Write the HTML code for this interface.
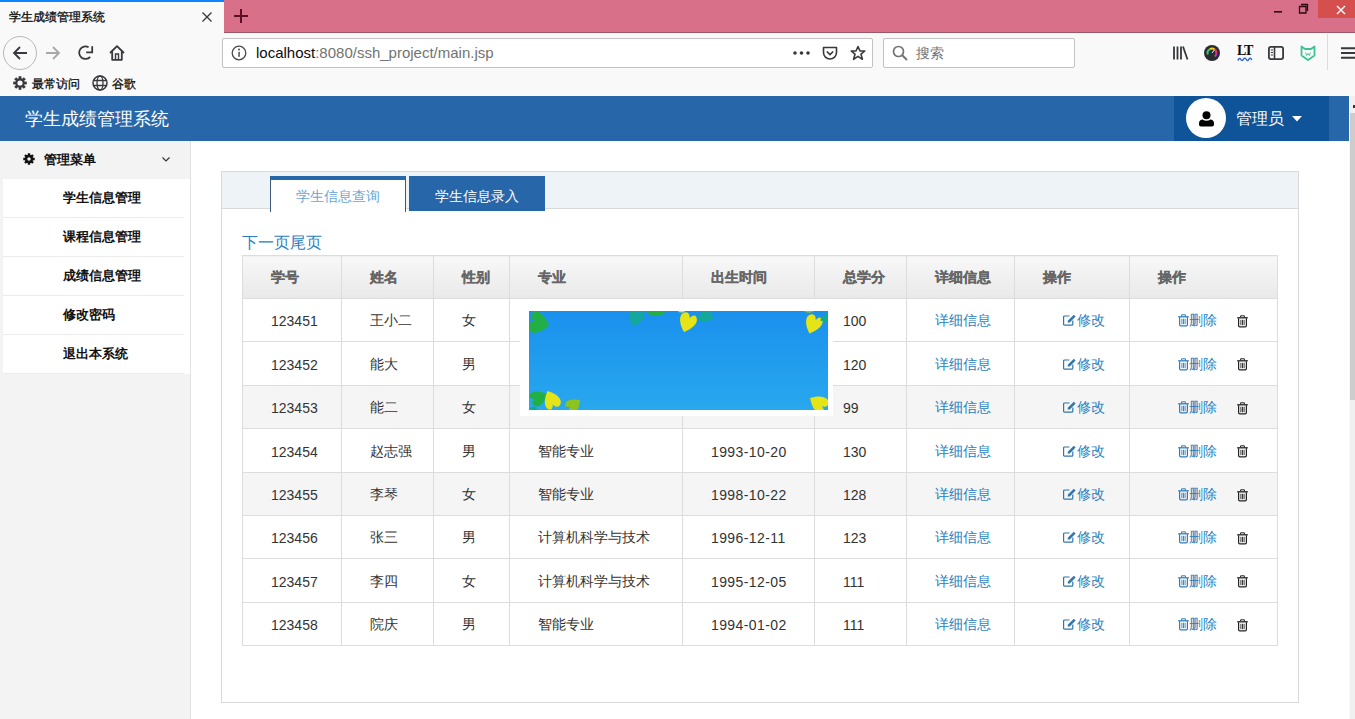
<!DOCTYPE html>
<html><head><meta charset="utf-8">
<style>
*{box-sizing:border-box;margin:0;padding:0}
html,body{width:1355px;height:719px;overflow:hidden;background:#fff;font-family:"Liberation Sans",sans-serif;position:relative}
.a{position:absolute}
svg{position:absolute;overflow:visible}
/* browser chrome */
#tabbar{left:0;top:0;width:1355px;height:33px;background:#d9708a;border-bottom:1px solid #9a5868}
#tab{left:0;top:0;width:224px;height:33px;background:#f9f9fa;border-top:2px solid #0a84ff}
#tab .t{left:9px;top:7px;font-size:12px;color:#0c0c0d;white-space:nowrap;-webkit-text-stroke:0.3px #0c0c0d}
#nav{left:0;top:33px;width:1355px;height:63px;background:#f9f9fa}
.url{border:1px solid #c2c2c4;background:#fff;border-radius:2px}
#page{left:0;top:96px;width:1349px;height:623px;background:#fff;overflow:hidden}
#hdr{left:0;top:0;width:1349px;height:45px;background:#2767a9}
#hdr .title{left:25px;top:11px;font-size:18px;color:#fff;white-space:nowrap}
#user{left:1174px;top:0;width:155px;height:45px;background:#0f5499}
#side{left:0;top:45px;width:191px;height:600px;background:#f3f3f3;border-right:1px solid #e2e2e2}
.mi{left:3px;width:187px;height:39px;background:#fff;box-shadow:inset 0 -1px 0 #fff;font-size:13px;font-weight:bold;color:#111}
.mi span{position:absolute;left:60px;top:10px;white-space:nowrap}
.mi:after{content:"";position:absolute;left:0;bottom:0;width:181px;height:1px;background:#ececec}
#panel{left:221px;top:75px;width:1078px;height:532px;border:1px solid #d9d9d9;background:#fff}
#panelhead{left:0;top:0;width:1076px;height:37px;background:#eef3f8;border-bottom:1px solid #d9d9d9}
table{border-collapse:collapse;position:absolute;left:242px;top:159px;width:1035px;table-layout:fixed}
td,th{border:1px solid #ddd;font-size:14px;padding:2px 0 0 28px;text-align:left;white-space:nowrap;color:#333;font-weight:normal;position:relative}
th{height:43px;color:#666;font-weight:bold;-webkit-text-stroke:0.25px #666;background:linear-gradient(#f8f8f8,#e9e9e9);padding-top:1px}
tr.g td{background:#f5f5f5}
a{color:#2a7fc0;text-decoration:none}
td.e{padding-left:48px}
td.d{padding-left:48px}
.ic{display:inline-block;vertical-align:-1px}
</style></head><body>
<!-- ============ BROWSER CHROME ============ -->
<div id="tabbar" class="a"></div>
<div id="tab" class="a"><div class="t a">学生成绩管理系统</div></div>
<!-- tab close x -->
<svg style="left:201px;top:11px" width="12" height="12"><path d="M1.5 1.5L10.5 10.5M10.5 1.5L1.5 10.5" stroke="#38383d" stroke-width="1.3"/></svg>
<!-- new tab + -->
<svg style="left:233px;top:8px" width="16" height="16"><path d="M8 1V15M1 8H15" stroke="#5c0f25" stroke-width="2"/></svg>
<!-- window controls -->
<div class="a" style="left:1318px;top:0;width:37px;height:18px;background:#d54f4f"></div>
<svg style="left:1274px;top:11px" width="10" height="2"><rect x="0" y="0" width="8" height="1.6" fill="#2a0a12"/></svg>
<svg style="left:1298px;top:3px" width="12" height="12"><path d="M3 1.5H9.5V8M1.5 3.5H8V10H1.5Z" stroke="#2a0a12" stroke-width="1.3" fill="none"/></svg>
<svg style="left:1336px;top:5px" width="10" height="10"><path d="M1 1L9 9M9 1L1 9" stroke="#fff" stroke-width="1.4"/></svg>

<div id="nav" class="a"></div>
<!-- back button -->
<div class="a" style="left:3px;top:36px;width:34px;height:34px;border-radius:50%;border:1px solid #b8b8ba;background:#f9f9fa"></div>
<svg style="left:12px;top:45px" width="16" height="16"><path d="M15 8H2M8 2L2 8L8 14" stroke="#38383d" stroke-width="1.8" fill="none"/></svg>
<!-- forward -->
<svg style="left:45px;top:45px" width="16" height="16"><path d="M1 8H14M8 2L14 8L8 14" stroke="#a8a8ab" stroke-width="1.8" fill="none"/></svg>
<!-- reload -->
<svg style="left:78px;top:45px" width="16" height="16"><path d="M10.6 2.2A6.3 6.3 0 1 0 12.2 11.8" stroke="#38383d" stroke-width="1.8" fill="none"/><path d="M8.2 7.4H14.2V1.2" stroke="#38383d" stroke-width="1.8" fill="none"/></svg>
<!-- home -->
<svg style="left:109px;top:45px" width="17" height="16"><path d="M1 8L8 1.2L15 8M3.2 6.2V14.8H12.8V6.2" stroke="#38383d" stroke-width="1.8" fill="none" stroke-linejoin="round"/><path d="M6.5 14.5V9H9.5V14.5" stroke="#38383d" stroke-width="1.4" fill="none"/></svg>

<!-- url bar -->
<div class="a url" style="left:222px;top:38px;width:651px;height:30px"></div>
<svg style="left:231px;top:45px" width="16" height="16"><circle cx="8" cy="8" r="6.8" stroke="#4a4a4f" stroke-width="1.3" fill="none"/><rect x="7.3" y="6.8" width="1.5" height="5" fill="#4a4a4f"/><circle cx="8" cy="4.6" r="1" fill="#4a4a4f"/></svg>
<div class="a" style="left:256px;top:44px;font-size:15px;color:#0c0c0d;white-space:nowrap">localhost<span style="color:#737373">:8080/ssh_project/main.jsp</span></div>
<!-- dots -->
<svg style="left:793px;top:51px" width="18" height="4"><circle cx="2" cy="2" r="1.8" fill="#38383d"/><circle cx="8.5" cy="2" r="1.8" fill="#38383d"/><circle cx="15" cy="2" r="1.8" fill="#38383d"/></svg>
<!-- pocket -->
<svg style="left:822px;top:45px" width="16" height="16"><path d="M1.5 2.5H14.5V7.5A6.5 6.5 0 0 1 1.5 7.5Z" stroke="#38383d" stroke-width="1.6" fill="none" stroke-linejoin="round"/><path d="M4.8 6.5L8 9.5L11.2 6.5" stroke="#38383d" stroke-width="1.7" fill="none"/></svg>
<!-- star -->
<svg style="left:850px;top:45px" width="16" height="16"><path d="M8 1.5L10 6H14.8L11 9.2L12.4 14.3L8 11.4L3.6 14.3L5 9.2L1.2 6H6Z" stroke="#38383d" stroke-width="1.6" fill="none" stroke-linejoin="round"/></svg>

<!-- search box -->
<div class="a url" style="left:883px;top:38px;width:192px;height:30px"></div>
<svg style="left:892px;top:45px" width="16" height="16"><circle cx="6.5" cy="6.5" r="5" stroke="#737373" stroke-width="1.7" fill="none"/><path d="M10 10L15 15" stroke="#737373" stroke-width="2"/></svg>
<div class="a" style="left:916px;top:45px;font-size:14px;color:#737373">搜索</div>

<!-- right toolbar icons -->
<svg style="left:1173px;top:46px" width="16" height="14"><path d="M1 0.5V13.5M4.5 0.5V13.5M8 0.5V13.5M10 0.5L14.5 13.5" stroke="#38383d" stroke-width="1.8" fill="none"/></svg>
<svg style="left:1204px;top:45px" width="16" height="16"><circle cx="8" cy="8" r="8" fill="#2b2b30"/><path d="M3.8 9.5A4.4 4.4 0 0 1 6 4.2" stroke="#27d36b" stroke-width="2" fill="none"/><path d="M6 4.2A4.4 4.4 0 0 1 10.5 4.3" stroke="#f7d21c" stroke-width="2" fill="none"/><path d="M10.5 4.3A4.4 4.4 0 0 1 12.3 8.6" stroke="#f0336e" stroke-width="2" fill="none"/><path d="M12.3 8.6A4.4 4.4 0 0 1 10.8 11.5" stroke="#b03cd8" stroke-width="2" fill="none"/><path d="M8 8L10.5 4.8" stroke="#e9e9e9" stroke-width="1"/></svg>
<div class="a" style="left:1237px;top:43px;font-size:14px;font-weight:bold;color:#0c0c0d;letter-spacing:-1px;font-family:'Liberation Serif',serif">LT</div>
<svg style="left:1237px;top:57px" width="16" height="5"><path d="M0.8 3.5C1.8 1 3 1 3.8 2.5S5.5 4 6.5 2.2S8.5 1 9.3 2.5S11 4 12 2.2S14 1 14.8 3" stroke="#2a60d8" stroke-width="1.4" fill="none"/></svg>
<svg style="left:1268px;top:46px" width="16" height="14"><rect x="0.9" y="0.9" width="14.2" height="12.2" rx="2" stroke="#38383d" stroke-width="1.8" fill="none"/><path d="M6.5 1V13" stroke="#38383d" stroke-width="1.6"/><path d="M2.8 4H5M2.8 6.5H5M2.8 9H5" stroke="#38383d" stroke-width="1"/></svg>
<svg style="left:1300px;top:45px" width="16" height="16"><path d="M1.5 1.5L5 4H11L14.5 1.5V10.5L8 15L1.5 10.5Z" stroke="#3cc297" stroke-width="1.8" fill="none" stroke-linejoin="round"/><path d="M5.5 7.5L6.7 10.5L8 8.3L9.3 10.5L10.5 7.5" stroke="#3cc297" stroke-width="0.9" fill="none"/></svg>
<div class="a" style="left:1327px;top:34px;width:1px;height:36px;background:#dcdcde"></div>
<svg style="left:1341px;top:47px" width="16" height="12"><path d="M0 1.2H16M0 6H16M0 10.8H16" stroke="#38383d" stroke-width="1.9"/></svg>

<!-- bookmarks bar -->
<svg style="left:13px;top:76px" width="14" height="14"><g fill="#38383d"><rect x="5.6" y="0.2" width="2.8" height="3" transform="rotate(0 7 7)"/><rect x="5.6" y="0.2" width="2.8" height="3" transform="rotate(45 7 7)"/><rect x="5.6" y="0.2" width="2.8" height="3" transform="rotate(90 7 7)"/><rect x="5.6" y="0.2" width="2.8" height="3" transform="rotate(135 7 7)"/><rect x="5.6" y="0.2" width="2.8" height="3" transform="rotate(180 7 7)"/><rect x="5.6" y="0.2" width="2.8" height="3" transform="rotate(225 7 7)"/><rect x="5.6" y="0.2" width="2.8" height="3" transform="rotate(270 7 7)"/><rect x="5.6" y="0.2" width="2.8" height="3" transform="rotate(315 7 7)"/><circle cx="7" cy="7" r="4.7"/></g><circle cx="7" cy="7" r="2.6" fill="#f9f9fa"/></svg>
<div class="a" style="left:32px;top:76px;font-size:12px;color:#0c0c0d;-webkit-text-stroke:0.3px #0c0c0d">最常访问</div>
<svg style="left:92px;top:75px" width="16" height="16"><circle cx="8" cy="8" r="7" stroke="#38383d" stroke-width="1.5" fill="none"/><ellipse cx="8" cy="8" rx="3" ry="7" stroke="#38383d" stroke-width="1.3" fill="none"/><path d="M1.5 5.5H14.5M1.5 10.5H14.5" stroke="#38383d" stroke-width="1.3"/></svg>
<div class="a" style="left:112px;top:76px;font-size:12px;color:#0c0c0d;-webkit-text-stroke:0.3px #0c0c0d">谷歌</div>

<!-- ============ PAGE ============ -->
<div id="page" class="a">
  <div id="hdr" class="a"><div class="title a">学生成绩管理系统</div>
    <div id="user" class="a">
      <div class="a" style="left:12px;top:2px;width:40px;height:40px;border-radius:50%;background:#fff"></div>
      <svg style="left:25px;top:15px" width="15" height="16"><circle cx="7.5" cy="4.2" r="4" fill="#000"/><path d="M2 15.5C0.8 15.5 0 14.7 0 13.5V12.3C0 10 1.6 8.6 3.6 8.6C4.7 9.4 6 9.8 7.5 9.8S10.3 9.4 11.4 8.6C13.4 8.6 15 10 15 12.3V13.5C15 14.7 14.2 15.5 13 15.5Z" fill="#000"/></svg>
      <div class="a" style="left:62px;top:13px;font-size:16px;color:#fff">管理员</div>
      <svg style="left:118px;top:20px" width="10" height="6"><path d="M0 0H10L5 5.5Z" fill="#fff"/></svg>
    </div>
  </div>
  <div id="side" class="a">
    <svg style="left:23px;top:12px" width="12" height="12"><g fill="#111"><circle cx="6" cy="6" r="4.2"/><path d="M6 0.3V11.7M0.3 6H11.7M2 2L10 10M10 2L2 10" stroke="#111" stroke-width="2.4"/></g><circle cx="6" cy="6" r="1.7" fill="#f3f3f3"/></svg>
    <div class="a" style="left:44px;top:10px;font-size:13px;font-weight:bold;color:#111">管理菜单</div>
    <svg style="left:162px;top:16px" width="8" height="5"><path d="M0.5 0.5L4 4L7.5 0.5" stroke="#333" stroke-width="1.2" fill="none"/></svg>
  </div>
  <div class="mi a" style="top:83px"><span>学生信息管理</span></div>
  <div class="mi a" style="top:122px"><span>课程信息管理</span></div>
  <div class="mi a" style="top:161px"><span>成绩信息管理</span></div>
  <div class="mi a" style="top:200px"><span>修改密码</span></div>
  <div class="mi a" style="top:239px"><span>退出本系统</span></div>

  <div id="panel" class="a"><div id="panelhead" class="a"></div></div>
  <div class="a" style="left:270px;top:80px;width:136px;height:36px;background:#fff;border-top:4px solid #2767a9;border-left:1px solid #3a5a7c;border-right:1px solid #3a5a7c"></div>
  <div class="a" style="left:296px;top:92px;font-size:14px;color:#6aa6d2">学生信息查询</div>
  <div class="a" style="left:409px;top:80px;width:136px;height:35px;background:#2767a9"></div>
  <div class="a" style="left:435px;top:92px;font-size:14px;color:#fff">学生信息录入</div>
  <div class="a" style="left:242px;top:137px;font-size:16px;color:#2a7fc0">下一页尾页</div>

  <table>
    <colgroup><col style="width:99px"><col style="width:92px"><col style="width:76px"><col style="width:173px"><col style="width:132px"><col style="width:92px"><col style="width:108px"><col style="width:115px"><col style="width:148px"></colgroup>
    <tr><th>学号</th><th>姓名</th><th>性别</th><th>专业</th><th>出生时间</th><th>总学分</th><th>详细信息</th><th>操作</th><th>操作</th></tr>
    <tr style="height:43px"><td>123451</td><td>王小二</td><td>女</td><td></td><td></td><td>100</td><td><a>详细信息</a></td><td class="e"><a><svg class="ic" style="position:relative;vertical-align:-1px" width="14" height="12"><path d="M9.8 6.5V10.2C9.8 10.8 9.4 11.2 8.8 11.2H1.6C1 11.2 0.6 10.8 0.6 10.2V3C0.6 2.4 1 2 1.6 2H6.5" stroke="#2f77ad" stroke-width="1.2" fill="none"/><path d="M4.6 8.6L5 6.6L10.8 0.8L12.6 2.6L6.8 8.4Z" fill="#2f77ad"/></svg>修改</a></td><td class="d"><a><svg class="ic" style="position:relative;vertical-align:-2px" width="11" height="13"><path d="M3.6 2.3V0.8H7.4V2.3" stroke="#2f7db8" stroke-width="1" fill="none"/><path d="M0.2 2.8H10.8" stroke="#2f7db8" stroke-width="1.3"/><path d="M1.6 3.2V10.6Q1.6 11.9 2.8 11.9H8.2Q9.4 11.9 9.4 10.6V3.2" stroke="#2f7db8" stroke-width="1.2" fill="none"/><path d="M3.9 4.8V10.2M5.5 4.8V10.2M7.1 4.8V10.2" stroke="#2f7db8" stroke-width="0.9"/></svg>删除</a><svg style="position:absolute;left:107px;top:16px" width="11" height="13"><path d="M3.6 2.3V0.8H7.4V2.3" stroke="#222" stroke-width="1" fill="none"/><path d="M0.2 2.8H10.8" stroke="#222" stroke-width="1.3"/><path d="M1.6 3.2V10.6Q1.6 11.9 2.8 11.9H8.2Q9.4 11.9 9.4 10.6V3.2" stroke="#222" stroke-width="1.2" fill="none"/><path d="M3.9 4.8V10.2M5.5 4.8V10.2M7.1 4.8V10.2" stroke="#222" stroke-width="0.9"/></svg></td></tr>
    <tr style="height:44px"><td>123452</td><td>能大</td><td>男</td><td></td><td></td><td>120</td><td><a>详细信息</a></td><td class="e"><a><svg class="ic" style="position:relative;vertical-align:-1px" width="14" height="12"><path d="M9.8 6.5V10.2C9.8 10.8 9.4 11.2 8.8 11.2H1.6C1 11.2 0.6 10.8 0.6 10.2V3C0.6 2.4 1 2 1.6 2H6.5" stroke="#2f77ad" stroke-width="1.2" fill="none"/><path d="M4.6 8.6L5 6.6L10.8 0.8L12.6 2.6L6.8 8.4Z" fill="#2f77ad"/></svg>修改</a></td><td class="d"><a><svg class="ic" style="position:relative;vertical-align:-2px" width="11" height="13"><path d="M3.6 2.3V0.8H7.4V2.3" stroke="#2f7db8" stroke-width="1" fill="none"/><path d="M0.2 2.8H10.8" stroke="#2f7db8" stroke-width="1.3"/><path d="M1.6 3.2V10.6Q1.6 11.9 2.8 11.9H8.2Q9.4 11.9 9.4 10.6V3.2" stroke="#2f7db8" stroke-width="1.2" fill="none"/><path d="M3.9 4.8V10.2M5.5 4.8V10.2M7.1 4.8V10.2" stroke="#2f7db8" stroke-width="0.9"/></svg>删除</a><svg style="position:absolute;left:107px;top:16px" width="11" height="13"><path d="M3.6 2.3V0.8H7.4V2.3" stroke="#222" stroke-width="1" fill="none"/><path d="M0.2 2.8H10.8" stroke="#222" stroke-width="1.3"/><path d="M1.6 3.2V10.6Q1.6 11.9 2.8 11.9H8.2Q9.4 11.9 9.4 10.6V3.2" stroke="#222" stroke-width="1.2" fill="none"/><path d="M3.9 4.8V10.2M5.5 4.8V10.2M7.1 4.8V10.2" stroke="#222" stroke-width="0.9"/></svg></td></tr>
    <tr class="g" style="height:43px"><td>123453</td><td>能二</td><td>女</td><td></td><td></td><td>99</td><td><a>详细信息</a></td><td class="e"><a><svg class="ic" style="position:relative;vertical-align:-1px" width="14" height="12"><path d="M9.8 6.5V10.2C9.8 10.8 9.4 11.2 8.8 11.2H1.6C1 11.2 0.6 10.8 0.6 10.2V3C0.6 2.4 1 2 1.6 2H6.5" stroke="#2f77ad" stroke-width="1.2" fill="none"/><path d="M4.6 8.6L5 6.6L10.8 0.8L12.6 2.6L6.8 8.4Z" fill="#2f77ad"/></svg>修改</a></td><td class="d"><a><svg class="ic" style="position:relative;vertical-align:-2px" width="11" height="13"><path d="M3.6 2.3V0.8H7.4V2.3" stroke="#2f7db8" stroke-width="1" fill="none"/><path d="M0.2 2.8H10.8" stroke="#2f7db8" stroke-width="1.3"/><path d="M1.6 3.2V10.6Q1.6 11.9 2.8 11.9H8.2Q9.4 11.9 9.4 10.6V3.2" stroke="#2f7db8" stroke-width="1.2" fill="none"/><path d="M3.9 4.8V10.2M5.5 4.8V10.2M7.1 4.8V10.2" stroke="#2f7db8" stroke-width="0.9"/></svg>删除</a><svg style="position:absolute;left:107px;top:16px" width="11" height="13"><path d="M3.6 2.3V0.8H7.4V2.3" stroke="#222" stroke-width="1" fill="none"/><path d="M0.2 2.8H10.8" stroke="#222" stroke-width="1.3"/><path d="M1.6 3.2V10.6Q1.6 11.9 2.8 11.9H8.2Q9.4 11.9 9.4 10.6V3.2" stroke="#222" stroke-width="1.2" fill="none"/><path d="M3.9 4.8V10.2M5.5 4.8V10.2M7.1 4.8V10.2" stroke="#222" stroke-width="0.9"/></svg></td></tr>
    <tr style="height:44px"><td>123454</td><td>赵志强</td><td>男</td><td>智能专业</td><td style="letter-spacing:0.4px">1993-10-20</td><td>130</td><td><a>详细信息</a></td><td class="e"><a><svg class="ic" style="position:relative;vertical-align:-1px" width="14" height="12"><path d="M9.8 6.5V10.2C9.8 10.8 9.4 11.2 8.8 11.2H1.6C1 11.2 0.6 10.8 0.6 10.2V3C0.6 2.4 1 2 1.6 2H6.5" stroke="#2f77ad" stroke-width="1.2" fill="none"/><path d="M4.6 8.6L5 6.6L10.8 0.8L12.6 2.6L6.8 8.4Z" fill="#2f77ad"/></svg>修改</a></td><td class="d"><a><svg class="ic" style="position:relative;vertical-align:-2px" width="11" height="13"><path d="M3.6 2.3V0.8H7.4V2.3" stroke="#2f7db8" stroke-width="1" fill="none"/><path d="M0.2 2.8H10.8" stroke="#2f7db8" stroke-width="1.3"/><path d="M1.6 3.2V10.6Q1.6 11.9 2.8 11.9H8.2Q9.4 11.9 9.4 10.6V3.2" stroke="#2f7db8" stroke-width="1.2" fill="none"/><path d="M3.9 4.8V10.2M5.5 4.8V10.2M7.1 4.8V10.2" stroke="#2f7db8" stroke-width="0.9"/></svg>删除</a><svg style="position:absolute;left:107px;top:16px" width="11" height="13"><path d="M3.6 2.3V0.8H7.4V2.3" stroke="#222" stroke-width="1" fill="none"/><path d="M0.2 2.8H10.8" stroke="#222" stroke-width="1.3"/><path d="M1.6 3.2V10.6Q1.6 11.9 2.8 11.9H8.2Q9.4 11.9 9.4 10.6V3.2" stroke="#222" stroke-width="1.2" fill="none"/><path d="M3.9 4.8V10.2M5.5 4.8V10.2M7.1 4.8V10.2" stroke="#222" stroke-width="0.9"/></svg></td></tr>
    <tr class="g" style="height:43px"><td>123455</td><td>李琴</td><td>女</td><td>智能专业</td><td style="letter-spacing:0.4px">1998-10-22</td><td>128</td><td><a>详细信息</a></td><td class="e"><a><svg class="ic" style="position:relative;vertical-align:-1px" width="14" height="12"><path d="M9.8 6.5V10.2C9.8 10.8 9.4 11.2 8.8 11.2H1.6C1 11.2 0.6 10.8 0.6 10.2V3C0.6 2.4 1 2 1.6 2H6.5" stroke="#2f77ad" stroke-width="1.2" fill="none"/><path d="M4.6 8.6L5 6.6L10.8 0.8L12.6 2.6L6.8 8.4Z" fill="#2f77ad"/></svg>修改</a></td><td class="d"><a><svg class="ic" style="position:relative;vertical-align:-2px" width="11" height="13"><path d="M3.6 2.3V0.8H7.4V2.3" stroke="#2f7db8" stroke-width="1" fill="none"/><path d="M0.2 2.8H10.8" stroke="#2f7db8" stroke-width="1.3"/><path d="M1.6 3.2V10.6Q1.6 11.9 2.8 11.9H8.2Q9.4 11.9 9.4 10.6V3.2" stroke="#2f7db8" stroke-width="1.2" fill="none"/><path d="M3.9 4.8V10.2M5.5 4.8V10.2M7.1 4.8V10.2" stroke="#2f7db8" stroke-width="0.9"/></svg>删除</a><svg style="position:absolute;left:107px;top:16px" width="11" height="13"><path d="M3.6 2.3V0.8H7.4V2.3" stroke="#222" stroke-width="1" fill="none"/><path d="M0.2 2.8H10.8" stroke="#222" stroke-width="1.3"/><path d="M1.6 3.2V10.6Q1.6 11.9 2.8 11.9H8.2Q9.4 11.9 9.4 10.6V3.2" stroke="#222" stroke-width="1.2" fill="none"/><path d="M3.9 4.8V10.2M5.5 4.8V10.2M7.1 4.8V10.2" stroke="#222" stroke-width="0.9"/></svg></td></tr>
    <tr style="height:43px"><td>123456</td><td>张三</td><td>男</td><td>计算机科学与技术</td><td style="letter-spacing:0.4px">1996-12-11</td><td>123</td><td><a>详细信息</a></td><td class="e"><a><svg class="ic" style="position:relative;vertical-align:-1px" width="14" height="12"><path d="M9.8 6.5V10.2C9.8 10.8 9.4 11.2 8.8 11.2H1.6C1 11.2 0.6 10.8 0.6 10.2V3C0.6 2.4 1 2 1.6 2H6.5" stroke="#2f77ad" stroke-width="1.2" fill="none"/><path d="M4.6 8.6L5 6.6L10.8 0.8L12.6 2.6L6.8 8.4Z" fill="#2f77ad"/></svg>修改</a></td><td class="d"><a><svg class="ic" style="position:relative;vertical-align:-2px" width="11" height="13"><path d="M3.6 2.3V0.8H7.4V2.3" stroke="#2f7db8" stroke-width="1" fill="none"/><path d="M0.2 2.8H10.8" stroke="#2f7db8" stroke-width="1.3"/><path d="M1.6 3.2V10.6Q1.6 11.9 2.8 11.9H8.2Q9.4 11.9 9.4 10.6V3.2" stroke="#2f7db8" stroke-width="1.2" fill="none"/><path d="M3.9 4.8V10.2M5.5 4.8V10.2M7.1 4.8V10.2" stroke="#2f7db8" stroke-width="0.9"/></svg>删除</a><svg style="position:absolute;left:107px;top:16px" width="11" height="13"><path d="M3.6 2.3V0.8H7.4V2.3" stroke="#222" stroke-width="1" fill="none"/><path d="M0.2 2.8H10.8" stroke="#222" stroke-width="1.3"/><path d="M1.6 3.2V10.6Q1.6 11.9 2.8 11.9H8.2Q9.4 11.9 9.4 10.6V3.2" stroke="#222" stroke-width="1.2" fill="none"/><path d="M3.9 4.8V10.2M5.5 4.8V10.2M7.1 4.8V10.2" stroke="#222" stroke-width="0.9"/></svg></td></tr>
    <tr style="height:44px"><td>123457</td><td>李四</td><td>女</td><td>计算机科学与技术</td><td style="letter-spacing:0.4px">1995-12-05</td><td>111</td><td><a>详细信息</a></td><td class="e"><a><svg class="ic" style="position:relative;vertical-align:-1px" width="14" height="12"><path d="M9.8 6.5V10.2C9.8 10.8 9.4 11.2 8.8 11.2H1.6C1 11.2 0.6 10.8 0.6 10.2V3C0.6 2.4 1 2 1.6 2H6.5" stroke="#2f77ad" stroke-width="1.2" fill="none"/><path d="M4.6 8.6L5 6.6L10.8 0.8L12.6 2.6L6.8 8.4Z" fill="#2f77ad"/></svg>修改</a></td><td class="d"><a><svg class="ic" style="position:relative;vertical-align:-2px" width="11" height="13"><path d="M3.6 2.3V0.8H7.4V2.3" stroke="#2f7db8" stroke-width="1" fill="none"/><path d="M0.2 2.8H10.8" stroke="#2f7db8" stroke-width="1.3"/><path d="M1.6 3.2V10.6Q1.6 11.9 2.8 11.9H8.2Q9.4 11.9 9.4 10.6V3.2" stroke="#2f7db8" stroke-width="1.2" fill="none"/><path d="M3.9 4.8V10.2M5.5 4.8V10.2M7.1 4.8V10.2" stroke="#2f7db8" stroke-width="0.9"/></svg>删除</a><svg style="position:absolute;left:107px;top:16px" width="11" height="13"><path d="M3.6 2.3V0.8H7.4V2.3" stroke="#222" stroke-width="1" fill="none"/><path d="M0.2 2.8H10.8" stroke="#222" stroke-width="1.3"/><path d="M1.6 3.2V10.6Q1.6 11.9 2.8 11.9H8.2Q9.4 11.9 9.4 10.6V3.2" stroke="#222" stroke-width="1.2" fill="none"/><path d="M3.9 4.8V10.2M5.5 4.8V10.2M7.1 4.8V10.2" stroke="#222" stroke-width="0.9"/></svg></td></tr>
    <tr style="height:43px"><td>123458</td><td>院庆</td><td>男</td><td>智能专业</td><td style="letter-spacing:0.4px">1994-01-02</td><td>111</td><td><a>详细信息</a></td><td class="e"><a><svg class="ic" style="position:relative;vertical-align:-1px" width="14" height="12"><path d="M9.8 6.5V10.2C9.8 10.8 9.4 11.2 8.8 11.2H1.6C1 11.2 0.6 10.8 0.6 10.2V3C0.6 2.4 1 2 1.6 2H6.5" stroke="#2f77ad" stroke-width="1.2" fill="none"/><path d="M4.6 8.6L5 6.6L10.8 0.8L12.6 2.6L6.8 8.4Z" fill="#2f77ad"/></svg>修改</a></td><td class="d"><a><svg class="ic" style="position:relative;vertical-align:-2px" width="11" height="13"><path d="M3.6 2.3V0.8H7.4V2.3" stroke="#2f7db8" stroke-width="1" fill="none"/><path d="M0.2 2.8H10.8" stroke="#2f7db8" stroke-width="1.3"/><path d="M1.6 3.2V10.6Q1.6 11.9 2.8 11.9H8.2Q9.4 11.9 9.4 10.6V3.2" stroke="#2f7db8" stroke-width="1.2" fill="none"/><path d="M3.9 4.8V10.2M5.5 4.8V10.2M7.1 4.8V10.2" stroke="#2f7db8" stroke-width="0.9"/></svg>删除</a><svg style="position:absolute;left:107px;top:16px" width="11" height="13"><path d="M3.6 2.3V0.8H7.4V2.3" stroke="#222" stroke-width="1" fill="none"/><path d="M0.2 2.8H10.8" stroke="#222" stroke-width="1.3"/><path d="M1.6 3.2V10.6Q1.6 11.9 2.8 11.9H8.2Q9.4 11.9 9.4 10.6V3.2" stroke="#222" stroke-width="1.2" fill="none"/><path d="M3.9 4.8V10.2M5.5 4.8V10.2M7.1 4.8V10.2" stroke="#222" stroke-width="0.9"/></svg></td></tr>
  </table>

  <!-- popup image -->
  <div class="a" style="left:520px;top:203px;width:313px;height:117px;background:#fff"></div>
  <svg style="left:529px;top:215px;overflow:hidden" width="299" height="99" viewBox="0 0 299 99">
    <defs><linearGradient id="sky" x1="0" y1="0" x2="0" y2="1"><stop offset="0" stop-color="#1a90ed"/><stop offset="1" stop-color="#28a8ee"/></linearGradient></defs>
    <rect width="299" height="99" fill="url(#sky)"/>
    <path transform="translate(20.0 14.0) rotate(103.2) scale(1.46 1.16)" d="M0 0C-4 4 -8 9 -7 13.5C-6 17.5 -2 18.5 -0.5 13C1 18.5 6 18 7.5 13.5C8.5 9 4.5 3.5 0 0Z" fill="#22b046"/>
    <path transform="translate(104.4 15.4) rotate(-162.3) scale(1.01 1.01)" d="M0 0C-4 4 -8 9 -7 13.5C-6 17.5 -2 18.5 -0.5 13C1 18.5 6 18 7.5 13.5C8.5 9 4.5 3.5 0 0Z" fill="#14a89c"/>
    <ellipse cx="127" cy="-1" rx="9.5" ry="6" fill="#22b046"/>
    <path transform="translate(155.0 21.0) rotate(-159.4) scale(1.14 1.14)" d="M0 0C-4 4 -8 9 -7 13.5C-6 17.5 -2 18.5 -0.5 13C1 18.5 6 18 7.5 13.5C8.5 9 4.5 3.5 0 0Z" fill="#e4e417"/>
    <path transform="translate(185.0 7.0) rotate(107.1) scale(0.91 0.91)" d="M0 0C-4 4 -8 9 -7 13.5C-6 17.5 -2 18.5 -0.5 13C1 18.5 6 18 7.5 13.5C8.5 9 4.5 3.5 0 0Z" fill="#14a89c"/>
    <ellipse cx="152.5" cy="-0.5" rx="3.5" ry="2" fill="#e4e417"/>
    <path transform="translate(280.5 22.5) rotate(-157.2) scale(1.12 1.12)" d="M0 0C-4 4 -8 9 -7 13.5C-6 17.5 -2 18.5 -0.5 13C1 18.5 6 18 7.5 13.5C8.5 9 4.5 3.5 0 0Z" fill="#e4e417"/>
    <ellipse cx="280" cy="-0.5" rx="4.5" ry="2.2" fill="#8cc420"/>
    <path transform="translate(299.0 2.0) rotate(32.0) scale(0.44 0.63)" d="M0 0C-4 4 -8 9 -7 13.5C-6 17.5 -2 18.5 -0.5 13C1 18.5 6 18 7.5 13.5C8.5 9 4.5 3.5 0 0Z" fill="#14a89c"/>
    <path transform="translate(281.0 87.0) rotate(-57.3) scale(1.11 1.11)" d="M0 0C-4 4 -8 9 -7 13.5C-6 17.5 -2 18.5 -0.5 13C1 18.5 6 18 7.5 13.5C8.5 9 4.5 3.5 0 0Z" fill="#e4e417"/>
    <path transform="translate(18.0 83.0) rotate(66.8) scale(1.02 1.02)" d="M0 0C-4 4 -8 9 -7 13.5C-6 17.5 -2 18.5 -0.5 13C1 18.5 6 18 7.5 13.5C8.5 9 4.5 3.5 0 0Z" fill="#22b046"/>
    <path transform="translate(18.5 80.0) rotate(-23.4) scale(1.09 1.09)" d="M0 0C-4 4 -8 9 -7 13.5C-6 17.5 -2 18.5 -0.5 13C1 18.5 6 18 7.5 13.5C8.5 9 4.5 3.5 0 0Z" fill="#e4e417"/>
    <path transform="translate(51.0 89.0) rotate(54.0) scale(0.91 0.91)" d="M0 0C-4 4 -8 9 -7 13.5C-6 17.5 -2 18.5 -0.5 13C1 18.5 6 18 7.5 13.5C8.5 9 4.5 3.5 0 0Z" fill="#8cc420"/>
    <ellipse cx="4.5" cy="99.5" rx="4" ry="4" fill="#14a89c"/>
  </svg>

</div>
<!-- scrollbar -->
<div class="a" style="left:1349px;top:96px;width:6px;height:623px;background:#f0f0f0"></div>
<div class="a" style="left:1349px;top:113px;width:6px;height:287px;background:#cdcdcd"></div>
<div class="a" style="left:1353px;top:105px;width:2px;height:3px;background:#333"></div>
<div class="a" style="left:1349px;top:96px;width:1px;height:623px;background:#f4f8fa"></div>
</body></html>
